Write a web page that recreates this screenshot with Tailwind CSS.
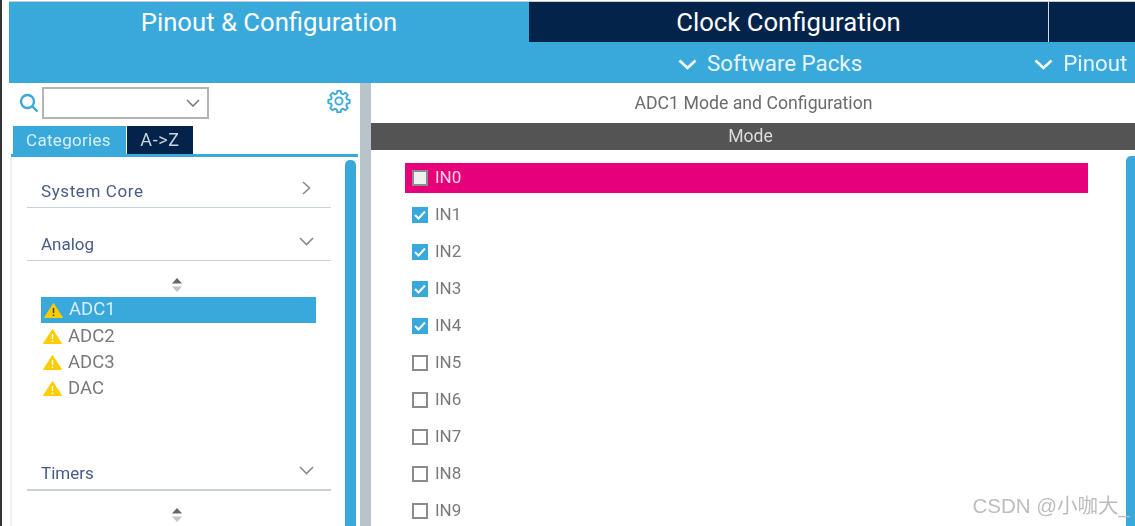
<!DOCTYPE html>
<html lang="en">
<head>
    <meta charset="UTF-8">
    <title>Pinout & Configuration</title>
    <script src="https://cdn.jsdelivr.net/npm/@tailwindcss/browser@4"></script>
</head>
<body class="h-[526px] w-[1135px] overflow-hidden bg-white font-['Roboto','Liberation_Sans',sans-serif]">
    <div class="relative flex h-[526px] w-[1135px] flex-col overflow-hidden pl-[9px] pt-px blur-[0.4px]">
        <!-- left window edge -->
        <div class="absolute left-0 top-0 h-full w-[2px] bg-[#333]"></div>

        <!-- tabs -->
        <div class="flex h-[41px] shrink-0 border-t border-[#c8ccd0]">
            <div class="flex w-[520px] justify-center bg-[#39a9dc] pt-[4px] text-[25.700px] leading-[32px] text-white">Pinout &amp; Configuration</div>
            <div class="flex w-[520px] justify-center border-r border-[#d5dbe0] bg-[#03234b] pt-[4px] text-[25.700px] leading-[32px] text-white">Clock Configuration</div>
            <div class="flex-1 bg-[#03234b]"></div>
        </div>

        <!-- sub bar -->
        <div class="flex h-[41px] shrink-0 items-center bg-[#39a9dc] pt-[3px] text-[22.300px] text-[#e6f4fb]">
            <div class="ml-[669px] flex items-center gap-[10px]">
                <svg class="h-[11px] w-[19px]" viewBox="0 0 19 11" fill="none" stroke="white" stroke-width="2.6"><path d="M1.500 1.500 9.500 9 17.500 1.500"/></svg>
                <span>Software Packs</span>
            </div>
            <div class="ml-[172px] flex items-center gap-[10px]">
                <svg class="h-[11px] w-[19px]" viewBox="0 0 19 11" fill="none" stroke="white" stroke-width="2.6"><path d="M1.500 1.500 9.500 9 17.500 1.500"/></svg>
                <span>Pinout</span>
            </div>
        </div>

        <div class="flex min-h-0 flex-1 overflow-hidden">
            <!-- left panel -->
            <div class="flex w-[351px] shrink-0 flex-col">
                <div class="flex h-[43px] shrink-0 items-start pl-[10px] pt-[4px]">
                    <svg class="mt-[6px] h-[20px] w-[20px]" viewBox="0 0 20 20" fill="none" stroke="#39a9dc" stroke-width="2.4"><circle cx="8.500" cy="8.500" r="6.500"/><path d="M13 13l5.500 5.500"/></svg>
                    <div class="ml-[3px] flex h-[32px] w-[167px] items-center justify-end border-2 border-[#b4b4b4] bg-white pr-[7px]">
                        <svg class="h-[8px] w-[14px]" viewBox="0 0 14 8" fill="none" stroke="#7b7b7b" stroke-width="1.600"><path d="M1 1l6 6 6-6"/></svg>
                    </div>
                    <svg class="ml-[118px] mt-[2px] h-[24px] w-[24px]" viewBox="0 0 24 24" fill="none" stroke="#39a9dc" stroke-width="1.800" stroke-linejoin="round">
                        <circle cx="12" cy="12" r="3.600"/>
                        <path d="M10.300 1.800h3.400l.5 2.700 1.900.8 2.300-1.600 2.400 2.400-1.600 2.300.8 1.900 2.700.5v3.400l-2.700.5-.8 1.900 1.600 2.300-2.400 2.400-2.300-1.600-1.900.8-.5 2.700h-3.400l-.5-2.700-1.900-.8-2.300 1.600-2.400-2.400 1.600-2.300-.8-1.900-2.700-.5v-3.400l2.700-.5.8-1.900-1.600-2.300 2.400-2.400 2.300 1.600 1.900-.8z"/>
                    </svg>
                </div>
                <div class="ml-[2px] mr-[2px] flex h-[31px] shrink-0 border-b-[3px] border-[#39a9dc] pl-[2px] text-[17px] leading-[28px] tracking-[0.3px]">
                    <div class="w-[113px] bg-[#39a9dc] pr-[2px] text-center text-[#d9eef8]">Categories</div>
                    <div class="ml-px w-[66px] bg-[#03234b] text-center text-[18px] tracking-[0.6px] text-[#c9d3de]">A-&gt;Z</div>
                </div>
                <div class="relative ml-[1px] flex-1 border-l-2 border-[#eef0f1] pl-[15px] text-[17px] text-[#4a5a86]">
                    <!-- scrollbar -->
                    <div class="absolute right-[4px] top-[3px] h-[400px] w-[11px] rounded-t-[5px] bg-[#39a9dc]"></div>

                    <div class="mr-[29px] mt-[15px] flex h-[36px] items-end justify-between border-b border-[#c9d0d6] pb-[3px] pl-[14px] pr-[20px]">
                        <span class="tracking-[0.6px]">System Core</span>
                        <svg class="mb-[9px] h-[14px] w-[9px]" viewBox="0 0 9 14" fill="none" stroke="#8a8a8a" stroke-width="1.600"><path d="M1 1l6.500 6L1 13"/></svg>
                    </div>
                    <div class="mr-[29px] mt-[17px] flex h-[36px] items-end justify-between border-b border-[#c9d0d6] pb-[3px] pl-[14px] pr-[17px]">
                        <span>Analog</span>
                        <svg class="mb-[11px] h-[9px] w-[15px]" viewBox="0 0 15 9" fill="none" stroke="#8a8a8a" stroke-width="1.600"><path d="M1 1l6.500 6.500L14 1"/></svg>
                    </div>

                    <div class="mt-[17px] flex w-[299px] justify-center">
                        <svg class="h-[14px] w-[12px]" viewBox="0 0 12 14"><path d="M6 0l5 5.500H1z" fill="#666"/><path d="M6 14l5-5.500H1z" fill="#c4c4c4"/></svg>
                    </div>
                    <div class="ml-[14px] mt-[5px] w-[275px] text-[18.500px] text-[#7a7a7a]">
                        <div class="flex h-[26px] items-center bg-[#39a9dc] pl-[3px] text-[#d9eef8]">
                            <svg class="h-[15px] w-[19px]" viewBox="0 0 19 15"><path d="M9.500 0.500 18.500 14.500H.5z" fill="#fc0" stroke="#fc0" stroke-linejoin="round"/><path d="M9.500 5v5M9.500 11.500v1.500" stroke="#39424a" stroke-width="1.500"/></svg>
                            <span class="ml-[6px]">ADC1</span>
                        </div>
                        <div class="flex h-[26px] items-center pl-[2px]">
                            <svg class="h-[15px] w-[19px]" viewBox="0 0 19 15"><path d="M9.500 0.500 18.500 14.500H.5z" fill="#fc0" stroke="#fc0" stroke-linejoin="round"/><path d="M9.500 5v5M9.500 11.500v1.500" stroke="white" stroke-width="1.500"/></svg>
                            <span class="ml-[6px] mt-[1px]">ADC2</span>
                        </div>
                        <div class="flex h-[26px] items-center pl-[2px]">
                            <svg class="h-[15px] w-[19px]" viewBox="0 0 19 15"><path d="M9.500 0.500 18.500 14.500H.5z" fill="#fc0" stroke="#fc0" stroke-linejoin="round"/><path d="M9.500 5v5M9.500 11.500v1.500" stroke="white" stroke-width="1.500"/></svg>
                            <span class="ml-[6px] mt-[1px]">ADC3</span>
                        </div>
                        <div class="flex h-[26px] items-center pl-[2px]">
                            <svg class="h-[15px] w-[19px]" viewBox="0 0 19 15"><path d="M9.500 0.500 18.500 14.500H.5z" fill="#fc0" stroke="#fc0" stroke-linejoin="round"/><path d="M9.500 5v5M9.500 11.500v1.500" stroke="white" stroke-width="1.500"/></svg>
                            <span class="ml-[6px] mt-[1px]">DAC</span>
                        </div>
                    </div>

                    <div class="mr-[29px] mt-[54px] flex h-[36px] items-end justify-between border-b-2 border-[#c9d0d6] pb-[3px] pl-[14px] pr-[17px]">
                        <span>Timers</span>
                        <svg class="mb-[11px] h-[9px] w-[15px]" viewBox="0 0 15 9" fill="none" stroke="#8a8a8a" stroke-width="1.600"><path d="M1 1l6.500 6.500L14 1"/></svg>
                    </div>
                    <div class="mt-[17px] flex w-[299px] justify-center">
                        <svg class="h-[14px] w-[12px]" viewBox="0 0 12 14"><path d="M6 0l5 5.500H1z" fill="#666"/><path d="M6 14l5-5.500H1z" fill="#c4c4c4"/></svg>
                    </div>
                </div>
            </div>

            <!-- divider -->
            <div class="w-[11px] shrink-0 bg-[#b9c4ca]"></div>

            <!-- right panel -->
            <div class="relative flex-1">
                <div class="h-[40px] pl-[1px] pt-[1px] text-center text-[17.700px] leading-[39px] text-[#6b6b6b]">ADC1 Mode and Configuration</div>
                <div class="h-[27px] bg-[#535453] pr-[5px] text-center text-[17.600px] leading-[26px] text-[#dcdcdc]">Mode</div>
                <div class="absolute right-0 top-[73px] h-[400px] w-[9px] rounded-tl-[5px] bg-[#39a9dc]"></div>

                <div class="ml-[34px] mt-[13px] w-[683px] text-[17px] text-[#7a7a7a]">
                    <div class="flex h-[30px] items-center bg-[#e6007a] pl-[7px] text-[#f8d8e8]">
                        <span class="h-[16px] w-[16px] border-2 border-[#8b8b8b] bg-[#f0f0f0]"></span>
                        <span class="ml-[7px]">IN0</span>
                    </div>
                    <div class="mt-[7px] flex h-[30px] items-center pl-[7px]">
                        <span class="flex h-[16px] w-[16px] items-center justify-center bg-[#39a9dc]"><svg class="h-[10px] w-[12px]" viewBox="0 0 12 10" fill="none" stroke="white" stroke-width="2"><path d="M1 5l3.500 3.500L11 1.500"/></svg></span>
                        <span class="ml-[7px]">IN1</span>
                    </div>
                    <div class="mt-[7px] flex h-[30px] items-center pl-[7px]">
                        <span class="flex h-[16px] w-[16px] items-center justify-center bg-[#39a9dc]"><svg class="h-[10px] w-[12px]" viewBox="0 0 12 10" fill="none" stroke="white" stroke-width="2"><path d="M1 5l3.500 3.500L11 1.500"/></svg></span>
                        <span class="ml-[7px]">IN2</span>
                    </div>
                    <div class="mt-[7px] flex h-[30px] items-center pl-[7px]">
                        <span class="flex h-[16px] w-[16px] items-center justify-center bg-[#39a9dc]"><svg class="h-[10px] w-[12px]" viewBox="0 0 12 10" fill="none" stroke="white" stroke-width="2"><path d="M1 5l3.500 3.500L11 1.500"/></svg></span>
                        <span class="ml-[7px]">IN3</span>
                    </div>
                    <div class="mt-[7px] flex h-[30px] items-center pl-[7px]">
                        <span class="flex h-[16px] w-[16px] items-center justify-center bg-[#39a9dc]"><svg class="h-[10px] w-[12px]" viewBox="0 0 12 10" fill="none" stroke="white" stroke-width="2"><path d="M1 5l3.500 3.500L11 1.500"/></svg></span>
                        <span class="ml-[7px]">IN4</span>
                    </div>
                    <div class="mt-[7px] flex h-[30px] items-center pl-[7px]">
                        <span class="h-[16px] w-[16px] border-2 border-[#8b8b8b] bg-white"></span>
                        <span class="ml-[7px]">IN5</span>
                    </div>
                    <div class="mt-[7px] flex h-[30px] items-center pl-[7px]">
                        <span class="h-[16px] w-[16px] border-2 border-[#8b8b8b] bg-white"></span>
                        <span class="ml-[7px]">IN6</span>
                    </div>
                    <div class="mt-[7px] flex h-[30px] items-center pl-[7px]">
                        <span class="h-[16px] w-[16px] border-2 border-[#8b8b8b] bg-white"></span>
                        <span class="ml-[7px]">IN7</span>
                    </div>
                    <div class="mt-[7px] flex h-[30px] items-center pl-[7px]">
                        <span class="h-[16px] w-[16px] border-2 border-[#8b8b8b] bg-white"></span>
                        <span class="ml-[7px]">IN8</span>
                    </div>
                    <div class="mt-[7px] flex h-[30px] items-center pl-[7px]">
                        <span class="h-[16px] w-[16px] border-2 border-[#8b8b8b] bg-white"></span>
                        <span class="ml-[7px]">IN9</span>
                    </div>
                </div>

                <!-- watermark -->
                <div class="absolute bottom-[7px] right-[5px] font-['Liberation_Sans','Noto_Sans_CJK_SC',sans-serif] text-[20.500px] leading-[26px] text-[#bdbdbd]">CSDN @小咖大_</div>
            </div>
        </div>
    </div>
</body>
</html>
